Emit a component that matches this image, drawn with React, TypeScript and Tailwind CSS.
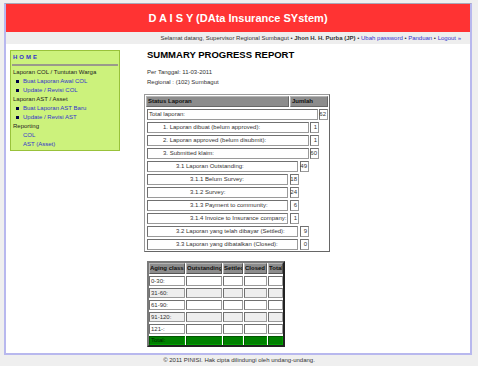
import React from 'react';

type Row = { label: string; value: string; indent: number; box: number; gap: number; align?: 'left' };

const rows: Row[] = [
  { label: 'Total laporan:', value: '62', indent: 1, box: 172, gap: 1, align: 'left' },
  { label: '1. Laporan dibuat (belum approved):', value: '1', indent: 15, box: 162, gap: 1 },
  { label: '2. Laporan approved (belum disubmit):', value: '1', indent: 15, box: 162, gap: 1 },
  { label: '3. Submitted klaim:', value: '60', indent: 15, box: 162, gap: 1 },
  { label: '3.1 Laporan Outstanding:', value: '49', indent: 28, box: 151, gap: 2 },
  { label: '3.1.1 Belum Survey:', value: '18', indent: 42, box: 141, gap: 2 },
  { label: '3.1.2 Survey:', value: '24', indent: 42, box: 141, gap: 2 },
  { label: '3.1.3 Payment to community:', value: '6', indent: 42, box: 141, gap: 2 },
  { label: '3.1.4 Invoice to Insurance company:', value: '1', indent: 42, box: 141, gap: 2 },
  { label: '3.2 Laporan yang telah dibayar (Settled):', value: '9', indent: 28, box: 151, gap: 2 },
  { label: '3.3 Laporan yang dibatalkan (Closed):', value: '0', indent: 28, box: 151, gap: 2 },
];

const aging = ['0-30:', '31-60:', '61-90:', '91-120:', '121-:'];
const agingCols = ['w-[36px]', 'w-[36px]', 'w-[20px]', 'w-[23px]', 'w-[15px]'];
const agingHeads = ['Aging class', 'Outstanding', 'Settled', 'Closed', 'Total'];

const cellBorder = 'border border-[#9a9a9a] border-t-[#707070] border-l-[#707070]';

const Sidebar: React.FC = () => {
  const link = 'text-[#3333cc]';
  const bullet = (text: string) => (
    <div className="flex items-center h-[9px] pl-[4px]">
      <span className="w-[3px] h-[3px] bg-[#000044] mr-[4px]" />
      <span className={link}>{text}</span>
    </div>
  );
  return (
    <div className="w-[110px] ml-[4px] mt-[6px] self-start bg-[#ccf27c] border border-[#99c23a] px-[1px] pt-[1px] pb-[1px] text-[6px] text-[#222]">
      <div className="h-[10px] flex items-center pl-[1px] text-[#3333cc] font-bold tracking-[2px]">HOME</div>
      <div className="h-[2px] bg-[#9a9a8a] mt-[2px] mb-[2px]" />
      <div className="h-[9px] flex items-center pl-[1px]">Laporan COL / Tuntutan Warga</div>
      {bullet('Buat Laporan Awal COL')}
      {bullet('Update / Revisi COL')}
      <div className="h-[9px] flex items-center pl-[1px]">Laporan AST / Asset</div>
      {bullet('Buat Laporan AST Baru')}
      {bullet('Update / Revisi AST')}
      <div className="h-[9px] flex items-center pl-[1px]">Reporting</div>
      <div className={`h-[9px] flex items-center pl-[11px] ${link}`}>COL</div>
      <div className={`h-[9px] flex items-center pl-[11px] ${link}`}>AST (Asset)</div>
    </div>
  );
};

const StatusTable: React.FC = () => (
  <div className="w-[186px] border border-[#9a9a9a] border-r-[#666] border-b-[#666] p-[1px] bg-white text-[6px] text-[#333]">
    <div className="flex gap-[1px] h-[11px] font-bold text-[#111]">
      <div className="w-[143px] bg-[#8c8c8c] border border-[#b5b5b5] border-r-[#666] border-b-[#666] flex items-center pl-[1px]">Status Laporan</div>
      <div className="w-[38px] bg-[#8c8c8c] border border-[#b5b5b5] border-r-[#666] border-b-[#666] flex items-center pl-[1px]">Jumlah</div>
    </div>
    {rows.map((r) => (
      <div key={r.label} className="flex mt-[2px] h-[11px] pl-[1px]" style={{ gap: r.gap }}>
        <div className={`${cellBorder} flex items-center whitespace-nowrap overflow-hidden`} style={{ width: r.box, paddingLeft: r.indent }}>
          {r.label}
        </div>
        <div className={`${cellBorder} w-[9px] flex items-center justify-end pr-[1px]`}>{r.value}</div>
      </div>
    ))}
  </div>
);

const AgingTable: React.FC = () => (
  <div className="w-[138px] mt-[9px] border-2 border-[#7a7a7a] border-r-[#222] border-b-[#222] bg-white text-[6px] text-[#333]">
    <div className="flex gap-[1px] h-[11px] font-bold text-[#111]">
      {agingHeads.map((h, i) => (
        <div key={h} className={`${agingCols[i]} bg-[#8c8c8c] border border-[#b5b5b5] border-r-[#555] border-b-[#555] flex items-center whitespace-nowrap overflow-hidden`}>
          {h}
        </div>
      ))}
    </div>
    {aging.map((a, ri) => (
      <div key={a} className="flex gap-[1px] h-[10px] mt-[2px]">
        {agingCols.map((w, i) => (
          <div key={i} className={`${w} ${cellBorder} ${ri % 2 === 1 ? 'bg-[#eeeeee]' : 'bg-white'} flex items-center pl-[1px]`}>
            {i === 0 ? a : ''}
          </div>
        ))}
      </div>
    ))}
    <div className="flex gap-[1px] h-[9px] mt-[2px]">
      {agingCols.map((w, i) => (
        <div key={i} className={`${w} bg-[#008000] border border-[#005500] border-b-[#00a000] border-r-[#00a000] flex items-center pl-[1px] text-[#002200]`}>
          {i === 0 ? 'Total:' : ''}
        </div>
      ))}
    </div>
  </div>
);

export default function App() {
  return (
    <div className="w-[478px] h-[366px] bg-[#efefef] overflow-hidden pt-[3px]" style={{ fontFamily: '"Liberation Sans", Arial, sans-serif' }}>
      <div className="ml-[4px] w-[468px] h-[352px] border-t border-t-[#a8a8b8] border-x-2 border-b-2 border-x-[#b8b8ee] border-b-[#b8b8ee] bg-white flex flex-col">
        <div className="h-[28px] bg-[#ff3333] flex items-center justify-center text-white font-bold text-[11px]">
          D A I S Y (DAta Insurance SYstem)
        </div>
        <div className="h-[12px] bg-[#eeeeee] flex items-center justify-end pr-[9px] text-[6px] text-[#333] whitespace-nowrap">
          Selamat datang, Supervisor Regional Sumbagut •&nbsp;<b>Jhon H. H. Purba (JP)</b>&nbsp;•&nbsp;
          <span className="text-[#3333cc]">Ubah password</span>&nbsp;•&nbsp;
          <span className="text-[#3333cc]">Panduan</span>&nbsp;•&nbsp;
          <span className="text-[#3333cc]">Logout »</span>
        </div>
        <div className="flex flex-1">
          <Sidebar />
          <div className="ml-[24px] pt-[6px] flex flex-col">
            <div className="h-[11px] flex items-center text-[9.5px] font-bold text-black ml-[3px]">SUMMARY PROGRESS REPORT</div>
            <div className="mt-[7px] ml-[3px] text-[6px] text-[#333] leading-[9.5px]">
              <div>Per Tanggal: 11-03-2011</div>
              <div>Regional : (102) Sumbagut</div>
            </div>
            <div className="mt-[7px]">
              <StatusTable />
            </div>
            <div className="ml-[3px]">
              <AgingTable />
            </div>
          </div>
        </div>
      </div>
      <div className="h-[11px] flex items-center justify-center text-[6px] text-[#333]">
        © 2011 PINISI. Hak cipta dilindungi oleh undang-undang.
      </div>
    </div>
  );
}
